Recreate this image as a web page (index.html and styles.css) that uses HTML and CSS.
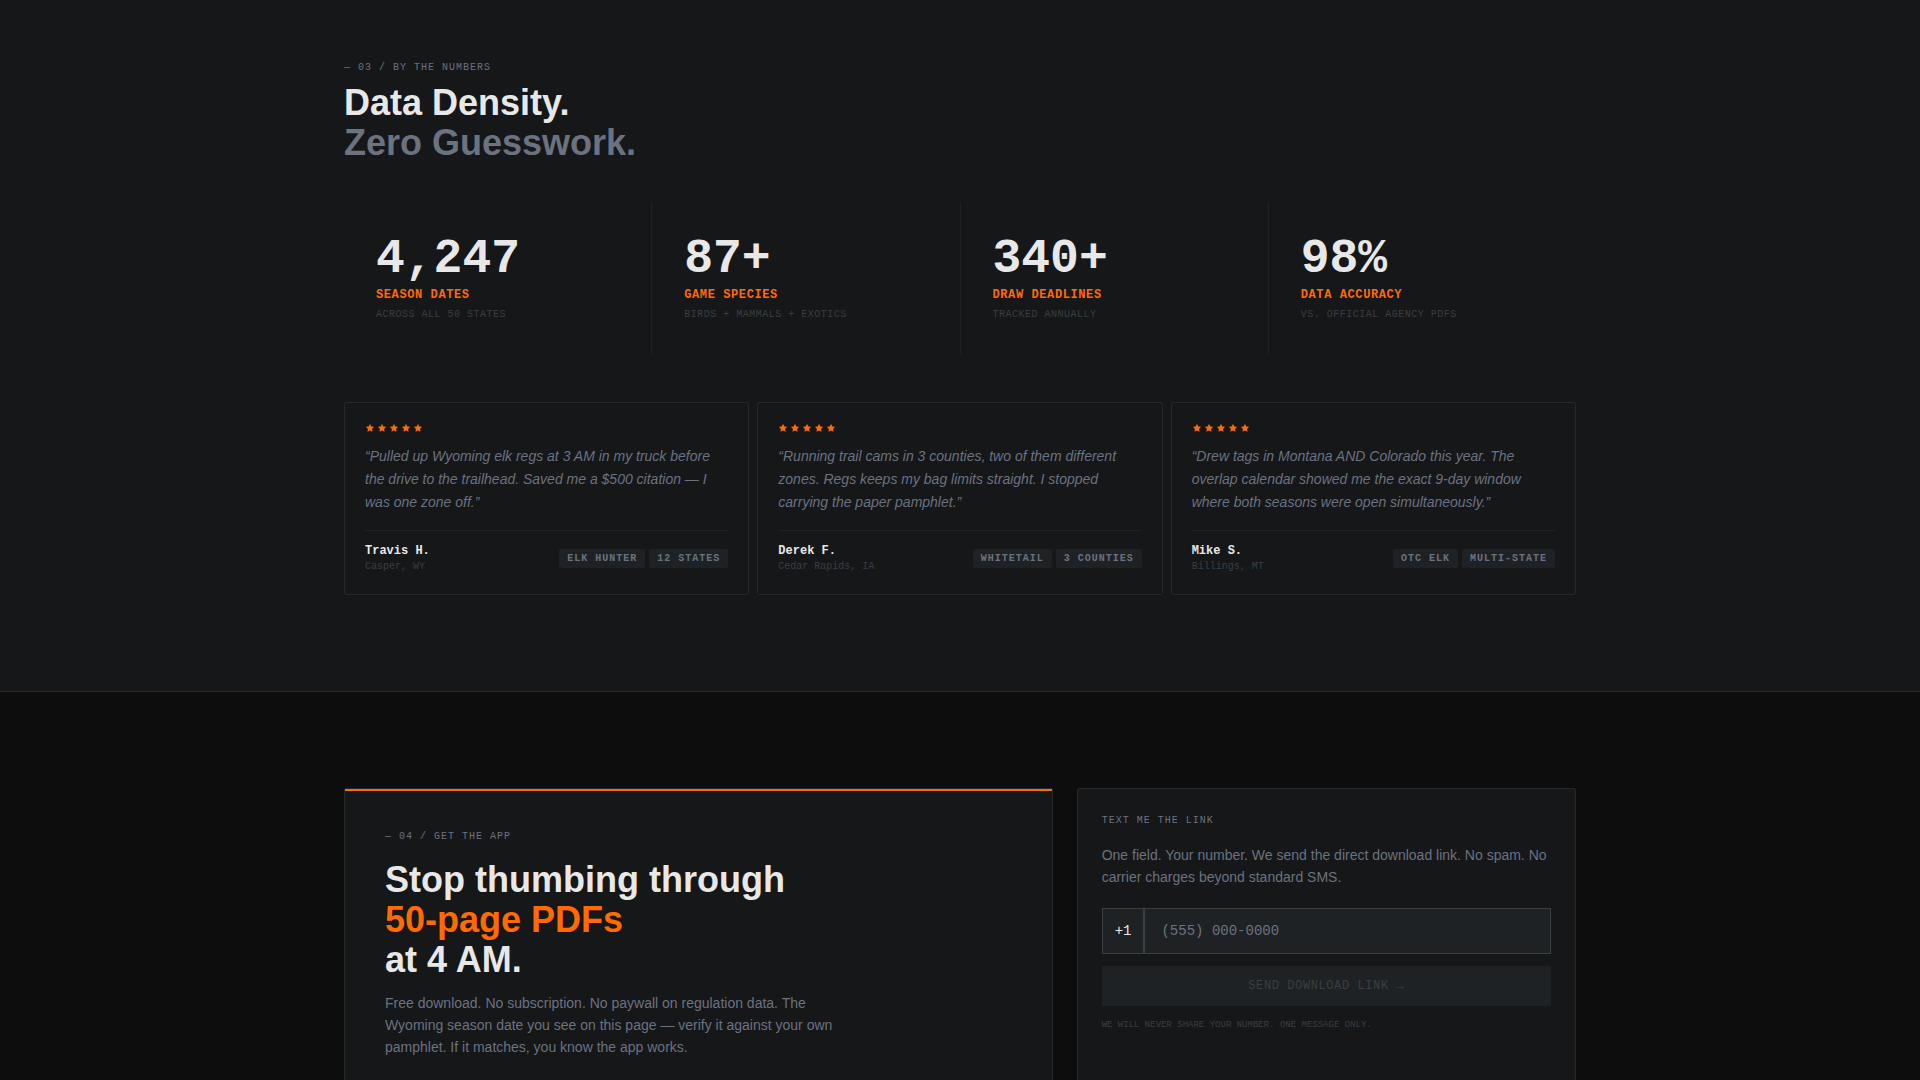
FILE: index.html
```html
<!DOCTYPE html>
<html lang="en">
<head>
    <meta charset="UTF-8">
    <meta name="viewport" content="width=device-width, initial-scale=1.0">
    <title>Regs</title>
    <link rel="stylesheet" href="styles.css">
</head>
<body>
    <svg class="sprite" aria-hidden="true">
        <symbol id="star" viewBox="0 0 24 24">
            <path d="M12 2l3.09 6.26L22 9.27l-5 4.87 1.18 6.88L12 17.77l-6.18 3.25L7 14.14 2 9.27l6.91-1.01L12 2z"/>
        </symbol>
    </svg>

    <section class="numbers">
        <div class="container">
            <p class="eyebrow">— 03 / BY THE NUMBERS</p>
            <h2>Data Density.<br><span class="muted">Zero Guesswork.</span></h2>

            <div class="stats">
                <div class="stat">
                    <div class="stat-value">4,247</div>
                    <div class="stat-label">SEASON DATES</div>
                    <div class="stat-note">ACROSS ALL 50 STATES</div>
                </div>
                <div class="stat">
                    <div class="stat-value">87+</div>
                    <div class="stat-label">GAME SPECIES</div>
                    <div class="stat-note">BIRDS + MAMMALS + EXOTICS</div>
                </div>
                <div class="stat">
                    <div class="stat-value">340+</div>
                    <div class="stat-label">DRAW DEADLINES</div>
                    <div class="stat-note">TRACKED ANNUALLY</div>
                </div>
                <div class="stat">
                    <div class="stat-value">98%</div>
                    <div class="stat-label">DATA ACCURACY</div>
                    <div class="stat-note">VS. OFFICIAL AGENCY PDFS</div>
                </div>
            </div>

            <div class="reviews">
                <article class="review">
                    <div class="stars">
                        <svg><use href="#star"/></svg>
                        <svg><use href="#star"/></svg>
                        <svg><use href="#star"/></svg>
                        <svg><use href="#star"/></svg>
                        <svg><use href="#star"/></svg>
                    </div>
                    <p class="quote">“Pulled up Wyoming elk regs at 3 AM in my truck before the drive to the trailhead. Saved me a $500 citation — I was one zone off.”</p>
                    <div class="review-footer">
                        <div>
                            <div class="name">Travis H.</div>
                            <div class="place">Casper, WY</div>
                        </div>
                        <div class="tags">
                            <span class="tag">ELK HUNTER</span>
                            <span class="tag">12 STATES</span>
                        </div>
                    </div>
                </article>
                <article class="review">
                    <div class="stars">
                        <svg><use href="#star"/></svg>
                        <svg><use href="#star"/></svg>
                        <svg><use href="#star"/></svg>
                        <svg><use href="#star"/></svg>
                        <svg><use href="#star"/></svg>
                    </div>
                    <p class="quote">“Running trail cams in 3 counties, two of them different zones. Regs keeps my bag limits straight. I stopped carrying the paper pamphlet.”</p>
                    <div class="review-footer">
                        <div>
                            <div class="name">Derek F.</div>
                            <div class="place">Cedar Rapids, IA</div>
                        </div>
                        <div class="tags">
                            <span class="tag">WHITETAIL</span>
                            <span class="tag">3 COUNTIES</span>
                        </div>
                    </div>
                </article>
                <article class="review">
                    <div class="stars">
                        <svg><use href="#star"/></svg>
                        <svg><use href="#star"/></svg>
                        <svg><use href="#star"/></svg>
                        <svg><use href="#star"/></svg>
                        <svg><use href="#star"/></svg>
                    </div>
                    <p class="quote">“Drew tags in Montana AND Colorado this year. The overlap calendar showed me the exact 9-day window where both seasons were open simultaneously.”</p>
                    <div class="review-footer">
                        <div>
                            <div class="name">Mike S.</div>
                            <div class="place">Billings, MT</div>
                        </div>
                        <div class="tags">
                            <span class="tag">OTC ELK</span>
                            <span class="tag">MULTI-STATE</span>
                        </div>
                    </div>
                </article>
            </div>
        </div>
    </section>

    <section class="download">
        <div class="container download-grid">
            <div class="panel pitch">
                <p class="eyebrow">— 04 / GET THE APP</p>
                <h2>Stop thumbing through<br><span class="accent">50-page PDFs</span><br>at 4 AM.</h2>
                <p class="copy">Free download. No subscription. No paywall on regulation data. The Wyoming season date you see on this page — verify it against your own pamphlet. If it matches, you know the app works.</p>
            </div>
            <form class="panel sms">
                <label class="eyebrow" for="phone">TEXT ME THE LINK</label>
                <p class="copy">One field. Your number. We send the direct download link. No spam. No carrier charges beyond standard SMS.</p>
                <div class="phone-row">
                    <span class="prefix">+1</span>
                    <input type="tel" id="phone" placeholder="(555) 000-0000">
                </div>
                <button type="submit" disabled>SEND DOWNLOAD LINK →</button>
                <p class="fine">WE WILL NEVER SHARE YOUR NUMBER. ONE MESSAGE ONLY.</p>
            </form>
        </div>
    </section>
</body>
</html>
```

FILE: styles.css
```css
* {
    box-sizing: border-box;
    margin: 0;
    padding: 0;
}

body {
    font-family: "Liberation Sans", Arial, sans-serif;
    background: #0d0d0d;
    color: #e8e8e8;
    font-size: 14px;
}

.sprite {
    display: none;
}

.container {
    max-width: 1280px;
    margin: 0 auto;
    padding: 0 24px;
}

.numbers {
    background: #151719;
    border-bottom: 1px solid #252829;
    padding: 60px 0 96px;
}

.eyebrow,
.stats,
.review-footer,
.phone-row,
.phone-row input,
button,
.fine {
    font-family: "Liberation Mono", "Courier New", monospace;
}

.eyebrow {
    display: block;
    font-size: 10px;
    line-height: 15px;
    letter-spacing: 1px;
    color: #6b7280;
}

h2 {
    font-size: 36px;
    line-height: 40px;
    font-weight: 700;
}

.numbers h2 {
    margin: 8px 0 40px;
}

.muted {
    color: #6b7280;
}

.accent {
    color: #ff6b00;
}

.stats {
    display: grid;
    grid-template-columns: repeat(4, 1fr);
    gap: 1px;
    background: #1e2224;
    margin-bottom: 48px;
}

.stat {
    background: #151719;
    padding: 32px;
}

.stat-value {
    font-size: 48px;
    line-height: 48px;
    font-weight: 700;
    margin-bottom: 4px;
}

.stat-label {
    font-size: 12px;
    line-height: 16px;
    font-weight: 700;
    letter-spacing: 0.05em;
    color: #ff6b00;
    margin-bottom: 4px;
}

.stat-note {
    font-size: 10px;
    line-height: 15px;
    letter-spacing: 0.05em;
    color: #3a3f42;
}

.reviews {
    display: grid;
    grid-template-columns: repeat(3, 1fr);
    gap: 8px;
}

.review {
    border: 1px solid #252829;
    border-radius: 2px;
    padding: 20px;
}

.stars {
    display: flex;
    gap: 2px;
    margin-bottom: 12px;
}

.stars svg {
    width: 10px;
    height: 10px;
    fill: #ff6b00;
}

.quote {
    font-style: italic;
    line-height: 23px;
    color: #6b7280;
    margin-bottom: 16px;
}

.review-footer {
    display: flex;
    justify-content: space-between;
    align-items: center;
    border-top: 1px solid #1e2224;
    padding-top: 12px;
}

.name {
    font-size: 12px;
    line-height: 16px;
    font-weight: 700;
}

.place {
    font-size: 10px;
    line-height: 15px;
    color: #3a3f42;
}

.tags {
    display: flex;
    gap: 4px;
}

.tag {
    background: #1e2224;
    border-radius: 2px;
    padding: 2px 8px;
    font-size: 10px;
    line-height: 15px;
    font-weight: 700;
    letter-spacing: 1px;
    color: #6b7280;
}

.download {
    padding: 96px 0;
}

.download-grid {
    display: grid;
    grid-template-columns: repeat(12, 1fr);
    gap: 24px;
}

.panel {
    background: #151719;
    border: 1px solid #252829;
    border-radius: 2px;
}

.pitch {
    grid-column: span 7;
    padding: 40px;
    position: relative;
}

/* accent bar along the top edge */
.pitch::before {
    content: "";
    position: absolute;
    top: 0;
    left: 0;
    right: 0;
    height: 2px;
    background: #ff6b00;
}

.pitch h2 {
    margin: 16px 0 12px;
}

.copy {
    line-height: 22px;
    color: #6b7280;
}

.pitch .copy {
    max-width: 448px;
}

.sms {
    grid-column: span 5;
    padding: 24px;
}

.sms .copy {
    margin: 16px 0 20px;
}

.phone-row {
    display: flex;
    margin-bottom: 12px;
}

.prefix,
.phone-row input {
    background: #1e2224;
    border: 1px solid #3a3f42;
    font-size: 14px;
    line-height: 20px;
    padding: 12px;
}

.phone-row input {
    flex: 1;
    min-width: 0;
    padding: 12px 16px;
    color: #e8e8e8;
    outline: none;
}

.phone-row input::placeholder {
    color: #6b7280;
}

button {
    display: block;
    width: 100%;
    border: none;
    background: #1e2224;
    color: #3a3f42;
    font-size: 12px;
    line-height: 16px;
    letter-spacing: 0.05em;
    padding: 12px;
}

.fine {
    font-size: 9px;
    line-height: 14px;
    color: #3a3f42;
    margin-top: 12px;
}
```
